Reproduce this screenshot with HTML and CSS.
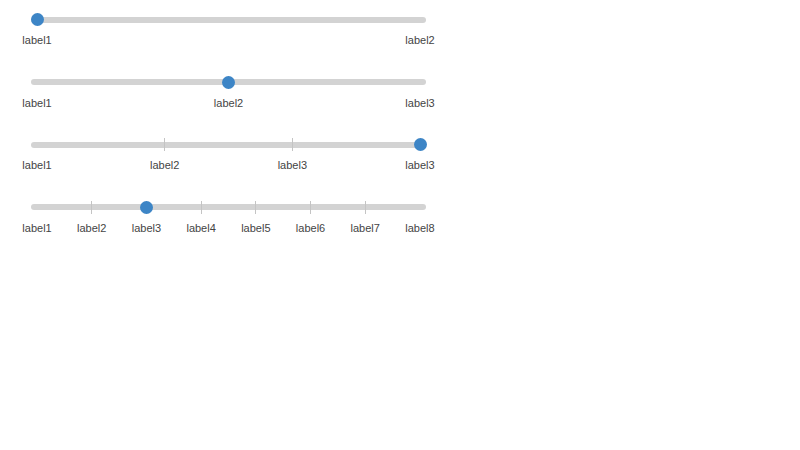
FILE: index.html
```html
<!DOCTYPE html>
<html lang="en">

<head>
    <meta charset="UTF-8">
    <meta name="viewport" content="width=device-width, initial-scale=1.0">
    <title>Sliders</title>
    <link rel="stylesheet" href="styles.css">
</head>

<body>
    <div class="sliders">
        <!-- two stops, first selected -->
        <div class="slider">
            <div class="track">
                <div class="thumb" style="left: calc((100% - 12px) * 0);"></div>
            </div>
            <div class="labels">
                <span class="label">label1</span>
                <span class="label">label2</span>
            </div>
        </div>

        <!-- three stops, middle selected -->
        <div class="slider">
            <div class="track">
                <div class="ticks">
                    <span class="tick hidden"></span>
                    <span class="tick"></span>
                    <span class="tick hidden"></span>
                </div>
                <div class="thumb" style="left: calc((100% - 12px) * 0.5);"></div>
            </div>
            <div class="labels">
                <span class="label">label1</span>
                <span class="label">label2</span>
                <span class="label">label3</span>
            </div>
        </div>

        <!-- four stops, last selected -->
        <div class="slider">
            <div class="track">
                <div class="ticks">
                    <span class="tick hidden"></span>
                    <span class="tick"></span>
                    <span class="tick"></span>
                    <span class="tick hidden"></span>
                </div>
                <div class="thumb" style="left: calc((100% - 12px) * 1);"></div>
            </div>
            <div class="labels">
                <span class="label">label1</span>
                <span class="label">label2</span>
                <span class="label">label3</span>
                <span class="label">label3</span>
            </div>
        </div>

        <!-- eight stops, third selected -->
        <div class="slider">
            <div class="track">
                <div class="ticks">
                    <span class="tick hidden"></span>
                    <span class="tick"></span>
                    <span class="tick"></span>
                    <span class="tick"></span>
                    <span class="tick"></span>
                    <span class="tick"></span>
                    <span class="tick"></span>
                    <span class="tick hidden"></span>
                </div>
                <div class="thumb" style="left: calc((100% - 12px) * 0.2857);"></div>
            </div>
            <div class="labels">
                <span class="label">label1</span>
                <span class="label">label2</span>
                <span class="label">label3</span>
                <span class="label">label4</span>
                <span class="label">label5</span>
                <span class="label">label6</span>
                <span class="label">label7</span>
                <span class="label">label8</span>
            </div>
        </div>
    </div>
</body>

</html>
```

FILE: styles.css
```css
body {
    font-family: "Liberation Sans", Arial, sans-serif;
    background: #fff;
    margin: 0;
    color: #444;
}

.sliders {
    padding: 13px 0 0 31px;
    width: 395px;
}

.slider {
    height: 62.5px;
}

.track {
    position: relative;
    height: 13px;
}

/* grey bar drawn through the middle of the track box */
.track::before {
    content: "";
    position: absolute;
    left: 0;
    right: 0;
    top: 3.5px;
    height: 6px;
    border-radius: 3px;
    background: #d3d3d3;
}

.ticks {
    position: absolute;
    left: 0;
    right: 0;
    top: 0;
    height: 13px;
    display: flex;
    justify-content: space-between;
}

.tick {
    width: 12px;
    display: flex;
    justify-content: center;
}

.tick::after {
    content: "";
    width: 1px;
    height: 13px;
    background: #c4c4c4;
}

.tick.hidden::after {
    display: none;
}

.thumb {
    position: absolute;
    top: 0;
    width: 13px;
    height: 13px;
    margin-left: -0.5px;
    border-radius: 50%;
    background: #3d85c6;
}

.labels {
    display: flex;
    justify-content: space-between;
    margin-top: 7px;
}

.label {
    width: 12px;
    display: flex;
    justify-content: center;
    white-space: nowrap;
    font-size: 11px;
    line-height: 14px;
}
```
